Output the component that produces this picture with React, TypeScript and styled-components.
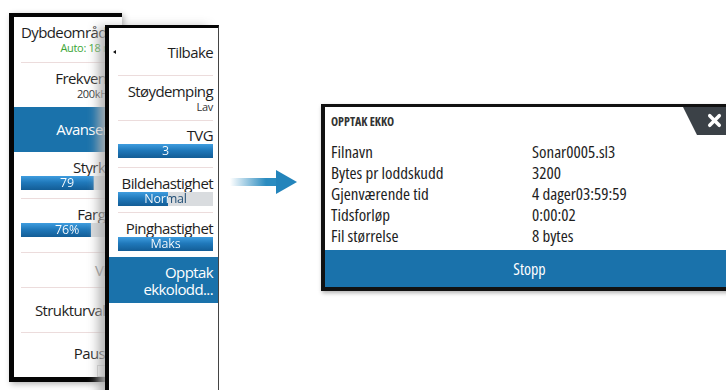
import styled, { createGlobalStyle } from 'styled-components';
import { X } from 'lucide-react';

const GlobalStyle = createGlobalStyle`
  body {
    margin: 0;
    background: #ffffff;
  }
  * {
    box-sizing: border-box;
  }
`;

const BLUE = '#1a72ab';
const BAR_FILL = 'linear-gradient(180deg, #3f9ddf 0%, #2079bb 45%, #135d96 100%)';

interface BarProps {
  value: number;
  label: string;
}

// value bar: blue part is the value, text is white over the blue and dark over the rest
function Bar({ value, label }: BarProps) {
  return (
    <Track style={{ background: `${BAR_FILL} 0 0 / ${value}% 100% no-repeat, #d9dcdf` }}>
      <TrackText
        style={{ backgroundImage: `linear-gradient(90deg, #ffffff ${value}%, #1b4a73 ${value}%)` }}
      >
        {label}
      </TrackText>
    </Track>
  );
}

function App() {
  const info = [
    ['Filnavn', 'Sonar0005.sl3'],
    ['Bytes pr loddskudd', '3200'],
    ['Gjenværende tid', '4 dager03:59:59'],
    ['Tidsforløp', '0:00:02'],
    ['Fil størrelse', '8 bytes'],
  ];

  return (
    <Stage>
      <GlobalStyle />

      <MainMenu>
        <Item $h={45} $pt={7}>
          <Label>Dybdeområde</Label>
          <Sub $color="#3aa635">Auto: 18 m</Sub>
        </Item>
        <Divider />
        <Item $h={44} $pt={7}>
          <Label>Frekvens</Label>
          <Sub>200kHz</Sub>
        </Item>
        <Item $h={45} $active $center>
          <Label>Avansert</Label>
        </Item>
        <Item $h={46} $pt={7}>
          <Label>Styrke</Label>
          <Bar value={79} label="79" />
        </Item>
        <Divider />
        <Item $h={53} $pt={7}>
          <Label>Farge</Label>
          <Bar value={76} label="76%" />
        </Item>
        <Divider />
        <Item $h={34} $center $muted>
          <Label>Vis</Label>
        </Item>
        <Divider />
        <Item $h={44} $center>
          <Label>Strukturvalg</Label>
        </Item>
        <Divider />
        <Item $h={44} $pt={12}>
          <Label>Pause</Label>
          <Check />
        </Item>
      </MainMenu>

      <SubMenu>
        <Item $h={47} $pt={16}>
          <BackMark />
          <Label>Tilbake</Label>
        </Item>
        <Divider />
        <Item $h={44} $pt={7}>
          <Label>Støydemping</Label>
          <Sub>Lav</Sub>
        </Item>
        <Divider />
        <Item $h={46} $pt={6}>
          <Label>TVG</Label>
          <Bar value={100} label="3" />
        </Item>
        <Divider />
        <Item $h={44} $pt={7}>
          <Label>Bildehastighet</Label>
          <Bar value={53} label="Normal" />
        </Item>
        <Divider />
        <Item $h={44} $pt={7}>
          <Label>Pinghastighet</Label>
          <Bar value={100} label="Maks" />
        </Item>
        <Item $h={46} $pt={7} $active>
          <Label>Opptak</Label>
          <Label>ekkolodd...</Label>
        </Item>
      </SubMenu>

      <Arrow width="70" height="30" viewBox="0 0 70 30">
        <defs>
          <linearGradient id="shaft" x1="0" x2="1" y1="0" y2="0">
            <stop offset="0" stopColor="#2b8cc0" stopOpacity="0" />
            <stop offset="0.75" stopColor="#2b8cc0" />
          </linearGradient>
        </defs>
        <rect x="0" y="11" width="48" height="8" fill="url(#shaft)" />
        <polygon points="46,3 67,15 46,27" fill="#2384bb" />
      </Arrow>

      <Dialog>
        <Title>OPPTAK EKKO</Title>
        <CloseTab>
          <X size={19} strokeWidth={4.5} color="#ffffff" />
        </CloseTab>
        <InfoGrid>
          {info.map(([k, v]) => (
            <Row key={k}>
              <span>{k}</span>
              <span>{v}</span>
            </Row>
          ))}
        </InfoGrid>
        <StopButton>Stopp</StopButton>
      </Dialog>
    </Stage>
  );
}
export default App;

const Stage = styled.div`
  position: relative;
  width: 726px;
  height: 390px;
  overflow: hidden;
  background: #ffffff;
  font-family: 'Open Sans', 'DejaVu Sans Condensed', sans-serif;
  color: #1e1e1e;
`;
const MainMenu = styled.div`
  --pl: 7px;
  --pr: 9px;
  position: absolute;
  left: 9px;
  top: 13px;
  width: 113px;
  height: 369px;
  display: flex;
  flex-direction: column;
  background: #ffffff;
  border: solid #050505;
  border-width: 4px 0 5px 5px;
  box-shadow: 2px 2px 6px rgba(0, 0, 0, 0.3);
  overflow: hidden;
`;
const SubMenu = styled.div`
  --pl: 9px;
  --pr: 5px;
  position: absolute;
  left: 105px;
  top: 25px;
  width: 114px;
  height: 380px;
  display: flex;
  flex-direction: column;
  background: #ffffff;
  border: solid #050505;
  border-width: 3px 1px 0 4px;
  border-right-color: #444;
  box-shadow: -9px 0 10px -2px rgba(175, 175, 175, 0.9);
`;
const Item = styled.div<{ $h: number; $pt?: number; $active?: boolean; $center?: boolean; $muted?: boolean }>`
  position: relative;
  flex: none;
  height: ${(p) => p.$h}px;
  padding: ${(p) => p.$pt ?? 0}px var(--pr) 0 var(--pl);
  display: flex;
  flex-direction: column;
  justify-content: ${(p) => (p.$center ? 'center' : 'flex-start')};
  text-align: right;
  background: ${(p) => (p.$active ? BLUE : 'transparent')};
  color: ${(p) => (p.$active ? '#ffffff' : p.$muted ? '#8a8a8a' : '#1e1e1e')};
`;
const Label = styled.div`
  font-size: 15px;
  line-height: 17px;
  letter-spacing: -0.6px;
  white-space: nowrap;
`;
const Sub = styled.div<{ $color?: string }>`
  font-size: 11px;
  line-height: 13px;
  letter-spacing: -0.3px;
  white-space: nowrap;
  color: ${(p) => p.$color ?? '#333'};
`;
const Divider = styled.div`
  flex: none;
  height: 1px;
  margin: 0 var(--pr) 0 var(--pl);
  background: #ecdcdc;
`;
const Track = styled.div`
  height: 14px;
`;
const TrackText = styled.div`
  font-size: 12.5px;
  line-height: 14px;
  letter-spacing: -0.2px;
  text-align: center;
  white-space: nowrap;
  color: transparent;
  -webkit-background-clip: text;
  background-clip: text;
`;
const BackMark = styled.span`
  position: absolute;
  left: 4px;
  top: 22px;
  width: 0;
  height: 0;
  border-style: solid;
  border-width: 2px 3px 2px 0;
  border-color: transparent #111 transparent transparent;
`;
const Check = styled.div`
  align-self: flex-end;
  width: 16px;
  height: 18px;
  margin-top: 3px;
  border: 1px solid #d4d4d4;
`;
const Arrow = styled.svg`
  position: absolute;
  left: 230px;
  top: 167px;
`;
const Dialog = styled.div`
  position: absolute;
  left: 321px;
  top: 104px;
  width: 416px;
  height: 187px;
  display: flex;
  flex-direction: column;
  background: #ffffff;
  border: solid #111;
  border-width: 3px 3px 4px 4px;
  box-shadow: 1px 2px 4px rgba(0, 0, 0, 0.3);
  font-stretch: 75%;
`;
const Title = styled.div`
  padding: 9px 0 0 6px;
  margin-bottom: 13px;
  font-size: 12px;
  line-height: 12px;
  font-weight: 700;
  color: #333;
`;
const CloseTab = styled.div`
  position: absolute;
  top: 0;
  right: 0;
  width: 51px;
  height: 28px;
  padding: 4px 0 0 22px;
  background: #3b4147;
  clip-path: polygon(0 0, 100% 0, 100% 100%, 14px 100%);
`;
const InfoGrid = styled.div`
  display: flex;
  flex-direction: column;
  padding-left: 6px;
  font-size: 17px;
  line-height: 21px;
  color: #1e1e1e;
`;
const Row = styled.div`
  display: grid;
  grid-template-columns: 201px 1fr;
  height: 21px;
`;
const StopButton = styled.button`
  margin-top: auto;
  height: 37px;
  border: none;
  background: ${BLUE};
  color: #ffffff;
  font-family: inherit;
  font-stretch: 75%;
  font-size: 16px;
`;
